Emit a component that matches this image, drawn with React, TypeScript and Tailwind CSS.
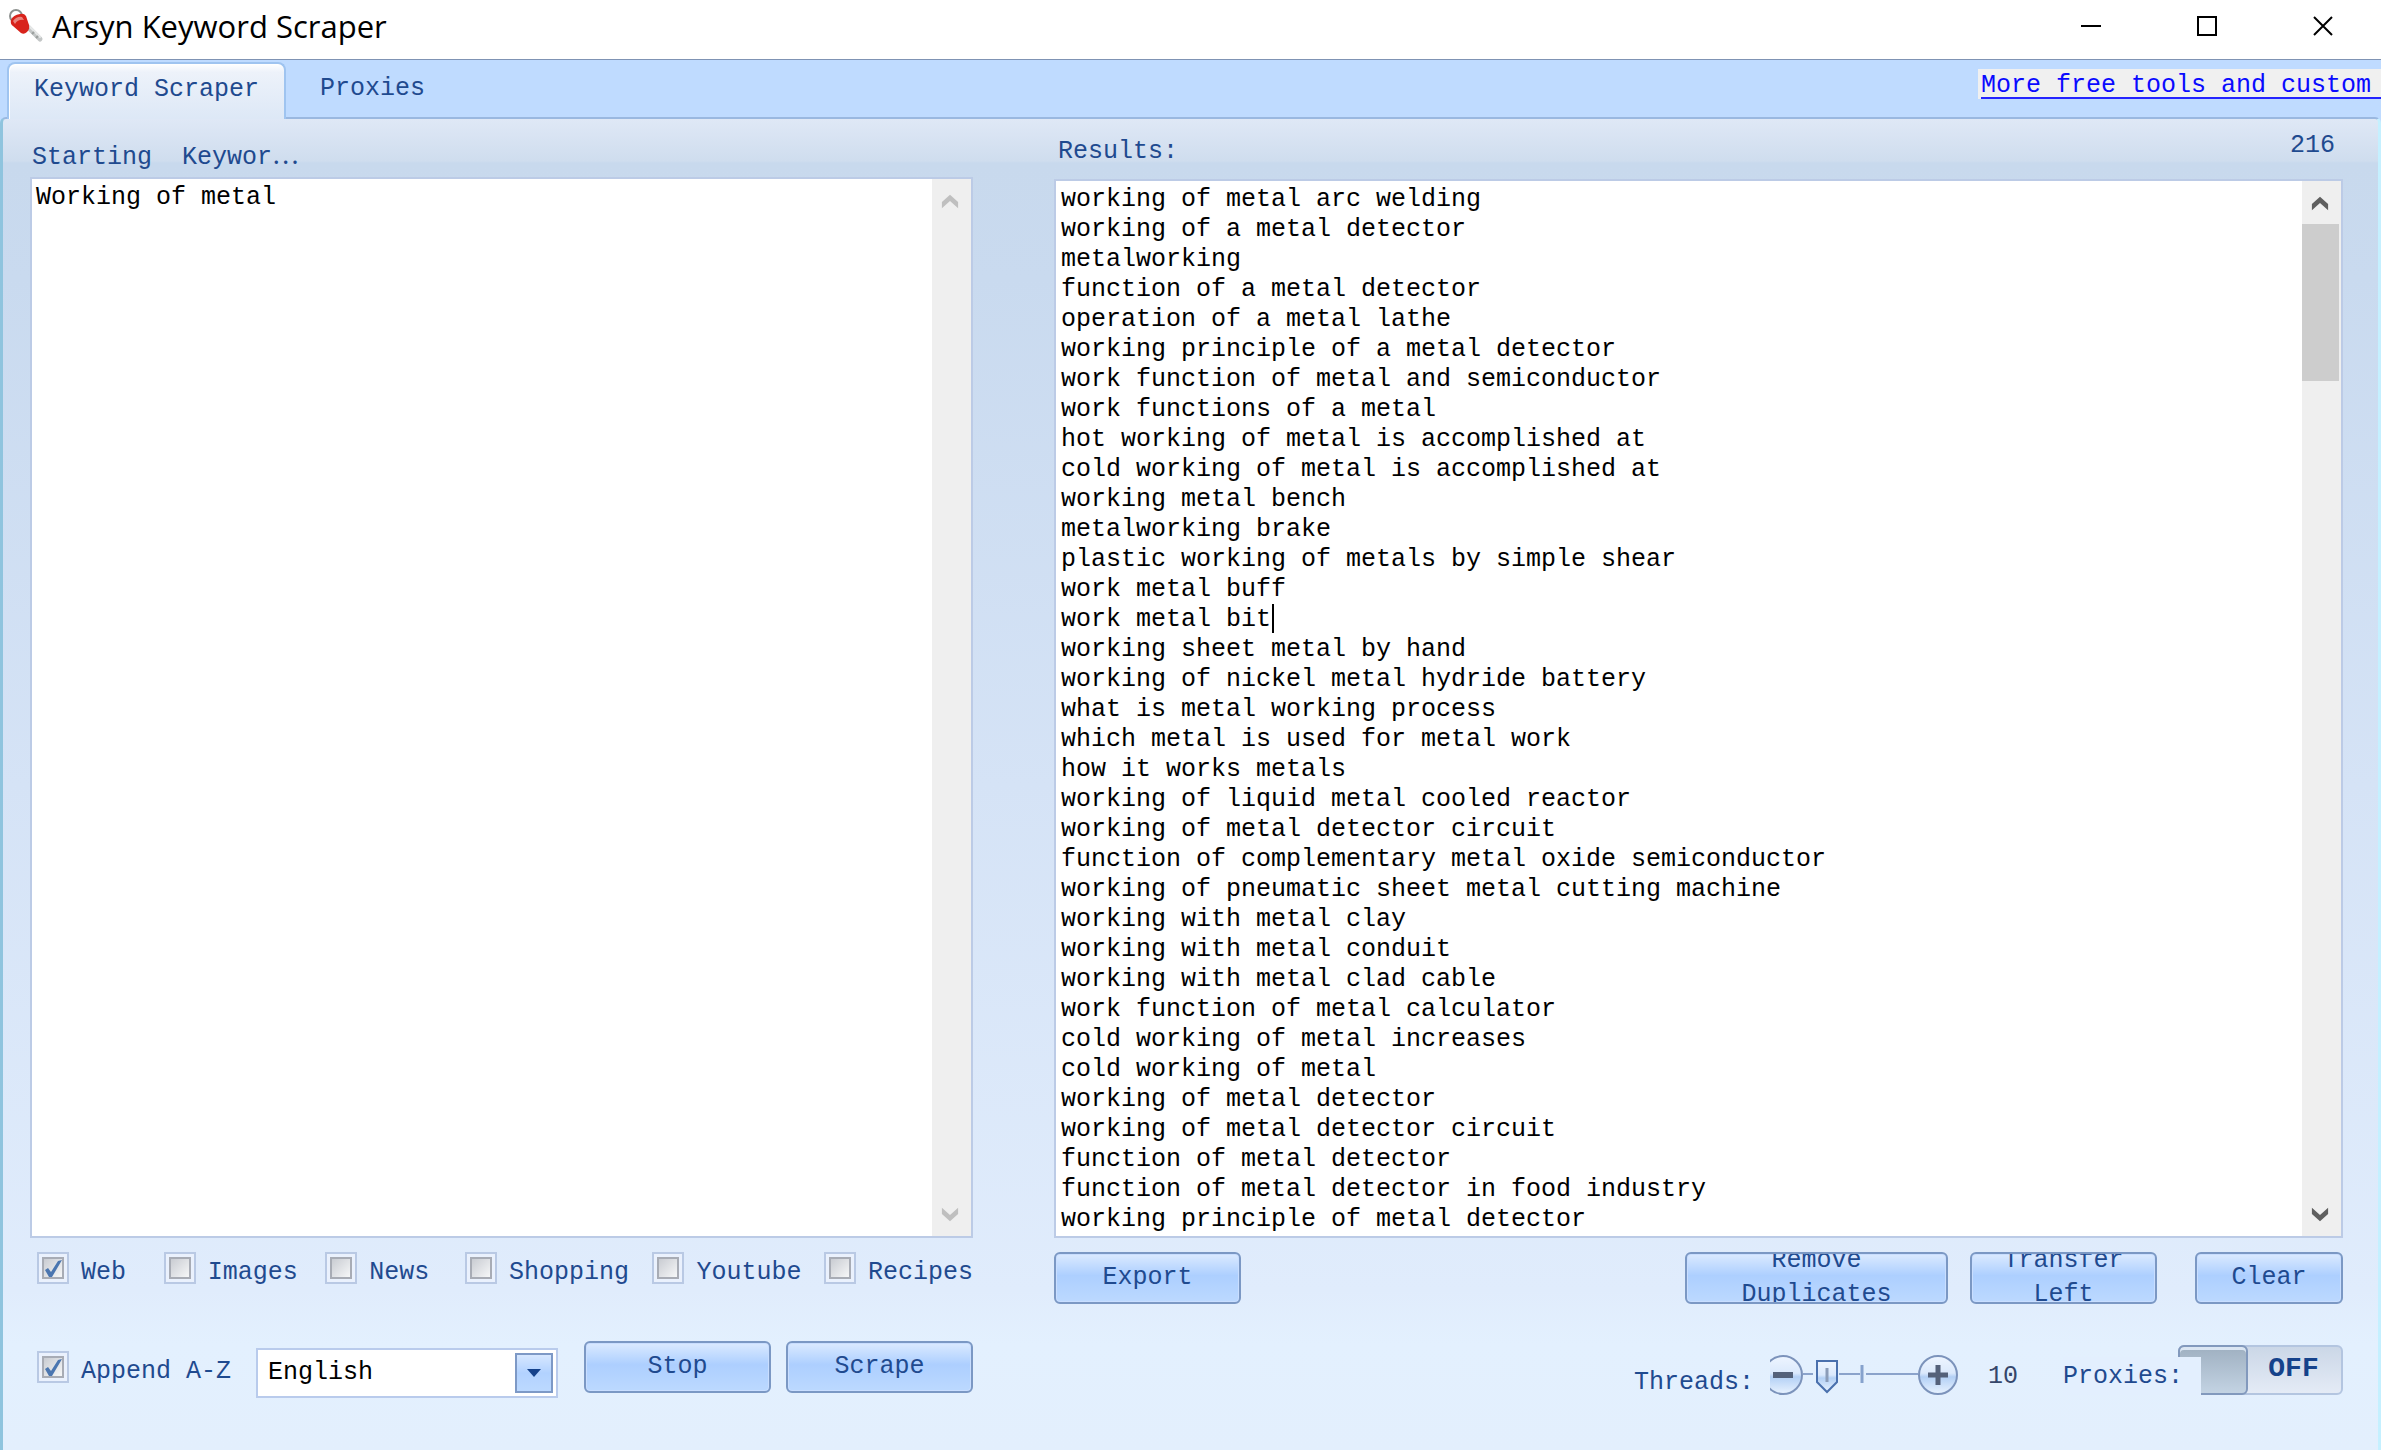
import React from "react";

const RESULTS = [
  "working of metal arc welding",
  "working of a metal detector",
  "metalworking",
  "function of a metal detector",
  "operation of a metal lathe",
  "working principle of a metal detector",
  "work function of metal and semiconductor",
  "work functions of a metal",
  "hot working of metal is accomplished at",
  "cold working of metal is accomplished at",
  "working metal bench",
  "metalworking brake",
  "plastic working of metals by simple shear",
  "work metal buff",
  "work metal bit",
  "working sheet metal by hand",
  "working of nickel metal hydride battery",
  "what is metal working process",
  "which metal is used for metal work",
  "how it works metals",
  "working of liquid metal cooled reactor",
  "working of metal detector circuit",
  "function of complementary metal oxide semiconductor",
  "working of pneumatic sheet metal cutting machine",
  "working with metal clay",
  "working with metal conduit",
  "working with metal clad cable",
  "work function of metal calculator",
  "cold working of metal increases",
  "cold working of metal",
  "working of metal detector",
  "working of metal detector circuit",
  "function of metal detector",
  "function of metal detector in food industry",
  "working principle of metal detector",
  "working principle of metal detector in the",
].join("\n");

const SOURCES = [
  { name: "Web", checked: true },
  { name: "Images", checked: false },
  { name: "News", checked: false },
  { name: "Shopping", checked: false },
  { name: "Youtube", checked: false },
  { name: "Recipes", checked: false },
];

function KeyIcon() {
  return (
    <svg className="size-9" viewBox="0 0 36 36" aria-hidden="true">
      <circle cx="8" cy="8" r="6" fill="none" stroke="#8d918f" strokeWidth="2" />
      <path d="M20 19 L32 31" stroke="#c3c6c6" strokeWidth="5" strokeLinecap="round" />
      <path d="M21 18 L32 29" stroke="#e6e8e8" strokeWidth="2" strokeLinecap="round" />
      <path d="M24 26l2-2M28 30l2-2" stroke="#9b9f9e" strokeWidth="2" />
      <path
        d="M3 12 Q2 16 5 18 L13 25 Q16 27 19 24 Q22 21 21 17 L18 8 Q16 5 12 6 Q5 7 3 12Z"
        fill="#d8231b"
      />
      <path d="M5 13 Q9 8 14 9 L16 12 Q10 11 7 16Z" fill="#e9857f" />
    </svg>
  );
}

function Chevron({ down, dim }: { down?: boolean; dim?: boolean }) {
  return (
    <svg className="h-4 w-[18px]" viewBox="0 0 20 16" aria-hidden="true">
      <path
        d={down ? "M1 0 L10 8 L19 0 V7 L10 15 L1 7Z" : "M1 16 L10 8 L19 16 V9 L10 1 L1 9Z"}
        fill={dim ? "#bfbfbf" : "#5f5f5f"}
      />
    </svg>
  );
}

function ScrollBar({ active }: { active?: boolean }) {
  return (
    <div className="flex w-[39px] shrink-0 flex-col bg-[#efefef]">
      <button aria-label="Scroll up" className="flex h-[43px] items-center justify-center pr-[3px]">
        <Chevron dim={!active} />
      </button>
      <div className="flex-1">
        {active && <div className="mr-[2px] h-[157px] bg-[#cdcdcd]" />}
      </div>
      <button aria-label="Scroll down" className="flex h-[43px] items-center justify-center pr-[3px]">
        <Chevron down dim={!active} />
      </button>
    </div>
  );
}

function CheckBox({ name, checked }: { name: string; checked: boolean }) {
  return (
    <label className="flex h-8 items-start gap-3 whitespace-nowrap">
      <span className="relative flex size-8 shrink-0 items-center justify-center border-2 border-[#b9c9e4] bg-[#eaf1fd]">
        <input
          type="checkbox"
          defaultChecked={checked}
          className="peer size-[22px] appearance-none border-2 border-[#a8acb5] bg-linear-to-br from-[#c9ccd2] to-[#f6f7f8]"
        />
        <svg
          className="pointer-events-none absolute hidden size-5 peer-checked:block"
          viewBox="0 0 20 20"
          aria-hidden="true"
        >
          <path d="M2 12 L5 10 L8 14 L15 3 L19 2 L9 19 L6 19Z" fill="#4b76b0" />
        </svg>
      </span>
      <span className="pt-[6px]">{name}</span>
    </label>
  );
}

function PushButton({ children, className }: { children: React.ReactNode; className: string }) {
  return (
    <button
      className={
        "flex h-[52px] shrink-0 items-center justify-center overflow-hidden rounded-[6px] border-2 border-[#7b98c4] bg-linear-to-b from-[#dbeaff] from-0% via-[#adcfff] via-45% to-[#bcd9ff] to-100% text-center leading-[34px] shadow-[inset_0_0_0_1px_#c9deff] " +
        className
      }
    >
      <span>{children}</span>
    </button>
  );
}

function ThreadSlider() {
  return (
    <div className="relative mt-[10px] h-10 w-[188px]">
      <svg className="h-10 w-[188px]" viewBox="0 0 188 40" aria-hidden="true">
        <defs>
          <linearGradient id="knob" x1="0" y1="0" x2="0" y2="1">
            <stop offset="0" stopColor="#eef5ff" />
            <stop offset="0.45" stopColor="#dbe9fc" />
            <stop offset="0.55" stopColor="#b3d0f5" />
            <stop offset="1" stopColor="#e9f3ff" />
          </linearGradient>
        </defs>
        <path d="M33 19H43M69 19H90M96 19H148" stroke="#8ba3cb" strokeWidth="2" />
        <path d="M92 10V28" stroke="#86a2cd" strokeWidth="3" />
        <circle cx="13" cy="20" r="19" fill="url(#knob)" stroke="#7c93bb" strokeWidth="2" />
        <rect x="3" y="17" width="20" height="6" fill="#54617a" />
        <circle cx="168" cy="20" r="19" fill="url(#knob)" stroke="#7c93bb" strokeWidth="2" />
        <path d="M158 20H178M168 10V30" stroke="#54617a" strokeWidth="5" />
        <path d="M47 6H67V27L57 37L47 27Z" fill="url(#knob)" stroke="#4a70ad" strokeWidth="2" />
        <path d="M57 13V27" stroke="#8b9cb8" strokeWidth="3" />
      </svg>
      <input
        type="range"
        min={1}
        max={50}
        defaultValue={10}
        aria-labelledby="threads-label"
        className="absolute inset-0 size-full opacity-0"
      />
    </div>
  );
}

export default function App() {
  return (
    <div className="flex min-h-screen flex-col overflow-hidden bg-[#bfdbff] font-['Liberation_Mono','Noto_Sans_CJK_SC',monospace] text-[25px] leading-[30px] text-[#1f4a8f]">
      <header className="flex h-[60px] items-stretch border-b border-[#7f93b4] bg-white text-black">
        <div className="flex flex-1 items-center gap-2 pb-[7px] pl-2">
          <KeyIcon />
          <h1 className="font-['Open_Sans',sans-serif] text-[31px] leading-9">Arsyn Keyword Scraper</h1>
        </div>
        <div className="flex pb-[7px]">
          <button aria-label="Minimize" className="flex w-[116px] items-center justify-center">
            <svg className="size-5" viewBox="0 0 20 20" aria-hidden="true">
              <path d="M0 10H20" stroke="#000" strokeWidth="2" />
            </svg>
          </button>
          <button aria-label="Maximize" className="flex w-[116px] items-center justify-center">
            <svg className="size-5" viewBox="0 0 20 20" aria-hidden="true">
              <rect x="1" y="1" width="18" height="18" fill="none" stroke="#000" strokeWidth="2" />
            </svg>
          </button>
          <button aria-label="Close" className="flex w-[116px] items-center justify-center">
            <svg className="size-5" viewBox="0 0 20 20" aria-hidden="true">
              <path d="M1 1L19 19M19 1L1 19" stroke="#000" strokeWidth="2" />
            </svg>
          </button>
        </div>
      </header>

      <nav className="flex h-[57px] items-start justify-between">
        <div role="tablist" className="flex pl-[7px] pt-[2px]">
          <button
            role="tab"
            aria-selected="true"
            className="relative z-10 h-[57px] w-[279px] rounded-t-[8px] border-2 border-b-0 border-[#9fc4f0] bg-linear-to-b from-white from-0% via-[#edf2fa] via-15% to-[#dde8f6] to-100% pb-[3px] text-center shadow-[inset_1px_1px_0_#ffffff]"
          >
            Keyword Scraper
          </button>
          <button role="tab" aria-selected="false" className="h-[57px] px-[34px] pb-[3px]">
            Proxies
          </button>
        </div>
        <a
          href="#tools"
          className="mt-[9px] block h-[30px] w-[403px] whitespace-nowrap bg-[#f0f0f0] pl-[3px] text-[#0a0aff]"
        >
          <span className="block h-[30px] border-b-2 border-[#2424ff] pt-[2px]">More free tools and custom</span>
        </a>
      </nav>

      <main className="grid flex-1 grid-cols-[943fr_1289fr] gap-x-[81px] rounded-t-[6px] border-x-[3px] border-t-2 border-l-[#8fc4de] border-r-[#c5f0ff] border-t-[#9ab8e0] bg-[linear-gradient(to_bottom,#dfe8f6_0px,#cfddee_42px,#c8d9ed_44px,#c9daef_160px,#d5e3f6_50%,#e0ecfc_88%,#e3f0fe_92%,#e3effd_100%)] pl-[27px] pr-[35px]">
        <section className="flex min-w-0 flex-col">
          <div className="flex h-[58px] items-start pl-[2px] pt-[22px]">
            <label htmlFor="seed" className="h-[30px] whitespace-pre">
              {"Starting  Keywor"}
              <span className="font-['Noto_Sans_CJK_SC'] leading-none">⋯</span>
            </label>
          </div>
          <div className="flex flex-1 border-2 border-[#bccbe6] bg-white">
            <textarea
              id="seed"
              defaultValue="Working of metal"
              className="block flex-1 resize-none overflow-hidden px-1 pt-1 text-black outline-none"
            />
            <ScrollBar />
          </div>

          <div className="mt-[14px] grid grid-cols-[127fr_162fr_140fr_188fr_172fr_147fr] pl-[7px]">
            {SOURCES.map((s) => (
              <CheckBox key={s.name} name={s.name} checked={s.checked} />
            ))}
          </div>
          <div className="mb-[52px] mt-[57px] flex h-[57px] items-start pl-[7px]">
            <div className="mt-[10px]">
              <CheckBox name="Append A-Z" checked />
            </div>
            <div className="relative ml-[25px] mt-[7px] h-[50px] flex-1 border-2 border-[#b9cbec] bg-white">
              <select
                aria-label="Language"
                className="size-full appearance-none pl-[10px] text-black outline-none"
                defaultValue="English"
              >
                <option>English</option>
              </select>
              <span className="pointer-events-none absolute bottom-[3px] right-[3px] top-[3px] flex w-[38px] items-center justify-center border-2 border-[#7d99c6] bg-linear-to-b from-[#d6e7ff] from-0% via-[#b2d2ff] via-50% to-[#bcd9ff] to-100%">
                <svg className="h-2 w-3.5" viewBox="0 0 14 8" aria-hidden="true">
                  <path d="M0 0H14L7 8Z" fill="#15428b" />
                </svg>
              </span>
            </div>
            <PushButton className="ml-[26px] w-[187px]">Stop</PushButton>
            <PushButton className="ml-[15px] w-[187px]">Scrape</PushButton>
          </div>
        </section>

        <section className="flex min-w-0 flex-col">
          <div className="flex h-[60px] items-start justify-between pl-1 pr-2 pt-3">
            <label htmlFor="results" className="pt-[6px]">
              Results:
            </label>
            <output>216</output>
          </div>
          <div className="relative flex flex-1 overflow-hidden border-2 border-[#bccbe6] bg-white">
            <textarea
              id="results"
              defaultValue={RESULTS}
              wrap="off"
              className="block flex-1 resize-none overflow-hidden px-[5px] pt-1 text-black outline-none"
            />
            <span className="absolute left-[216px] top-[423px] h-[29px] w-[2px] bg-black" />
            <ScrollBar active />
          </div>

          <div className="mt-[14px] flex items-start">
            <PushButton className="w-[187px]">Export</PushButton>
            <div className="flex-1" />
            <PushButton className="w-[263px] px-10">Remove Duplicates</PushButton>
            <PushButton className="ml-[22px] w-[187px] px-4">Transfer Left</PushButton>
            <PushButton className="ml-[38px] w-[148px]">Clear</PushButton>
          </div>
          <div className="mt-[41px] flex h-[105px] items-start justify-end">
            <span id="threads-label" className="mr-4 mt-[23px]">
              Threads:
            </span>
            <ThreadSlider />
            <output className="ml-[30px] mt-[17px] text-[#35466a]">10</output>
            <span
              id="proxies-label"
              className="relative z-10 ml-[45px] mt-3 h-[38px] w-[138px] bg-[#e3effe] pt-[5px]"
            >
              Proxies:
            </span>
            <button
              role="switch"
              aria-checked="false"
              aria-labelledby="proxies-label"
              className="-ml-[23px] flex h-[50px] w-[165px] items-stretch rounded-[6px] border-2 border-[#b3c5e0] bg-linear-to-b from-[#cbd7e7] to-[#e4ebf6] text-[28px] font-bold"
            >
              <span className="-m-[2px] w-[70px] rounded-[6px] border-2 border-[#8299bd] bg-linear-to-b from-[#9fb0c1] to-[#c3d3e3] shadow-[inset_0_3px_0_#dbe6f3]" />
              <span className="flex-1 pt-[7px] text-center text-[#15428b]">OFF</span>
            </button>
          </div>
        </section>
      </main>
    </div>
  );
}
